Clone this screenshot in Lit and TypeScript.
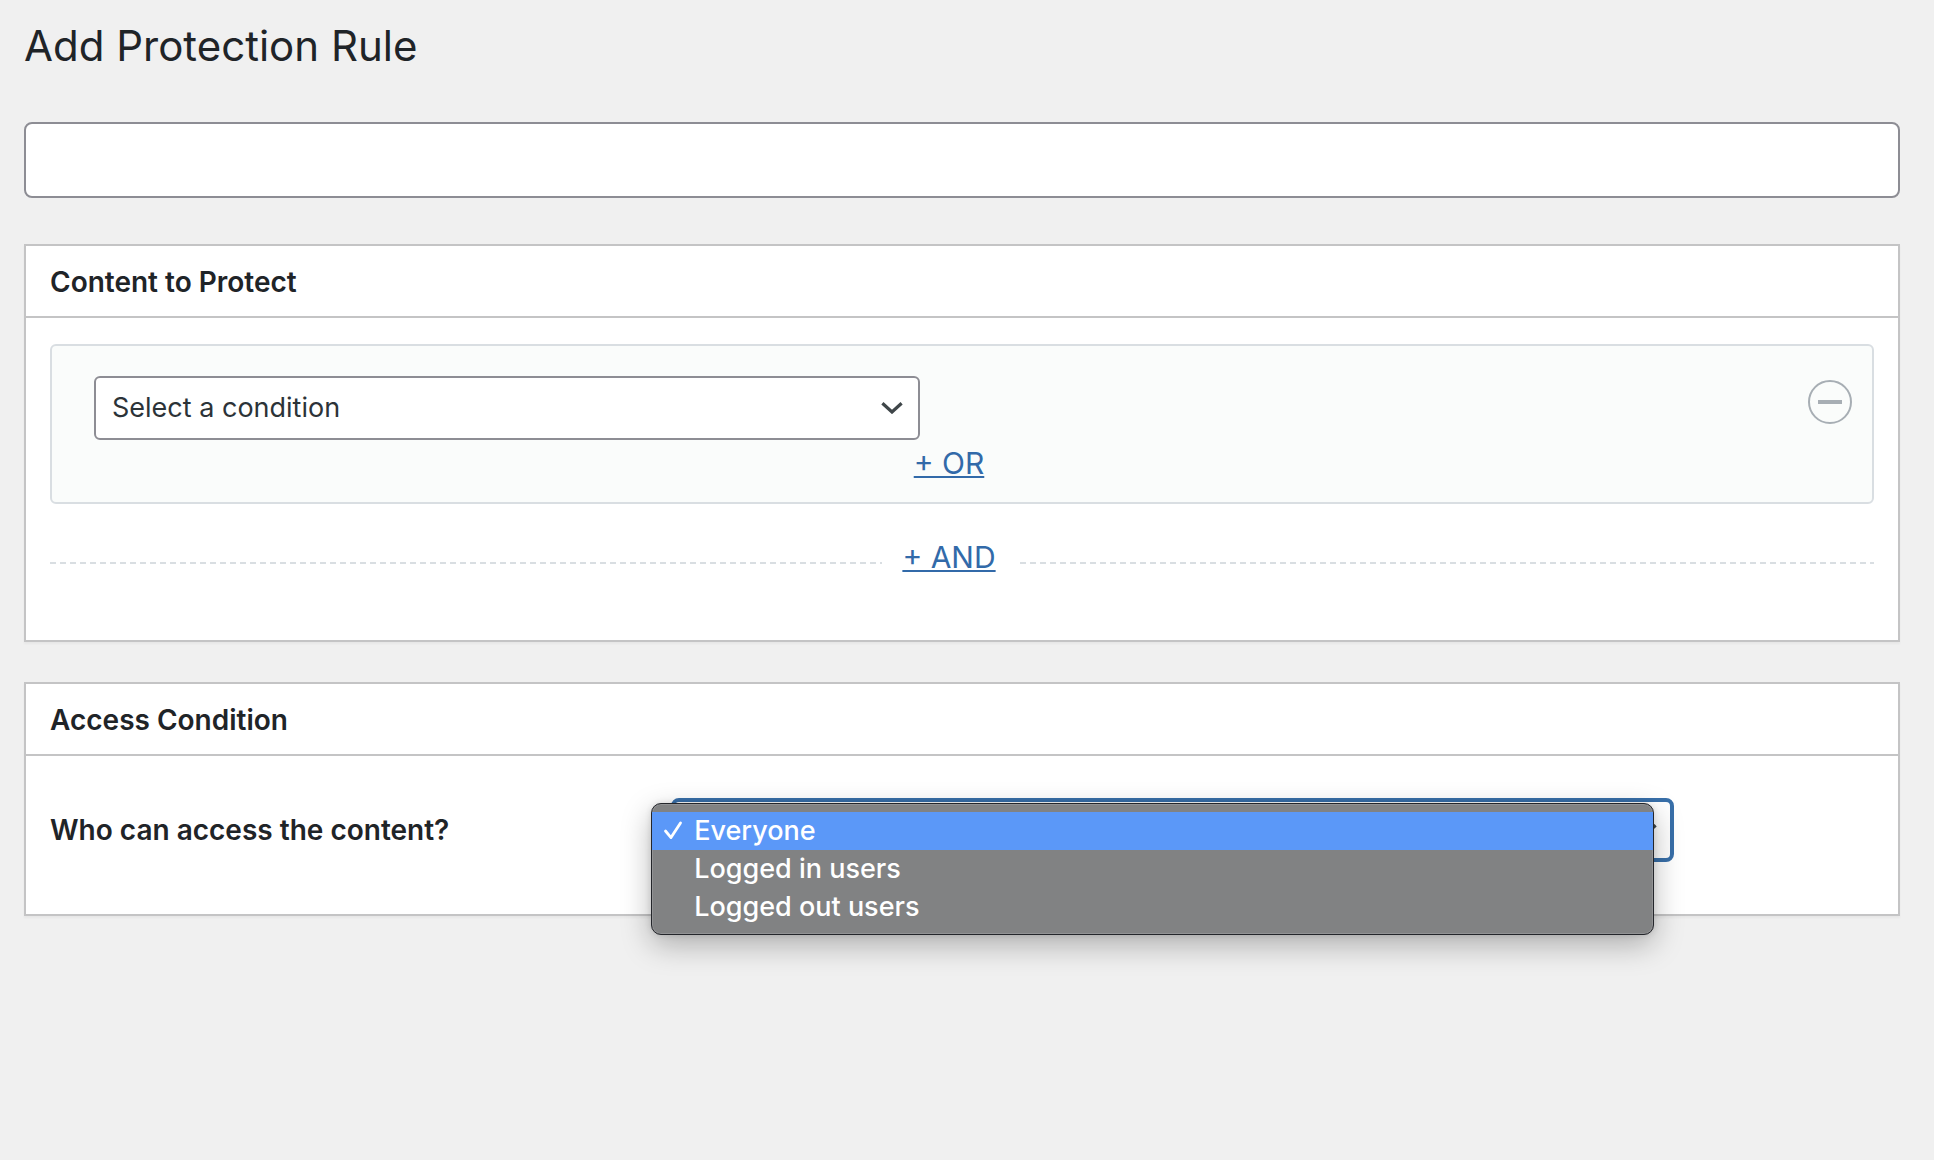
import { LitElement, html, css, svg } from "lit";
import { customElement, state } from "lit/decorators.js";

const chevron = html`<svg class="chevron" viewBox="0 0 22 12" aria-hidden="true">
  <path d="M1.4 1.2 L11 10 L20.6 1.2" fill="none" stroke="currentColor" stroke-width="3.2" />
</svg>`;

const check = svg`<path d="M2.5 10 L8 16.6 L17.5 2" fill="none" stroke="currentColor" stroke-width="2.8" stroke-linecap="round" stroke-linejoin="round" />`;

const AUDIENCES = ["Everyone", "Logged in users", "Logged out users"];

@customElement("app-root")
export class AppRoot extends LitElement {
  static styles = css`
    :host {
      display: block;
      box-sizing: border-box;
      min-height: 100vh;
      padding: 18px 34px 40px 24px;
      background: #f0f0f0;
      color: #1f2428;
      font-family: Inter, "Liberation Sans", sans-serif;
      font-size: 28px;
      line-height: 36px;
    }
    *,
    *::before,
    *::after {
      box-sizing: border-box;
    }
    .title {
      margin: 0 0 48px;
      font-size: 42px;
      line-height: 56px;
      font-weight: 400;
    }
    .name {
      display: block;
      width: 100%;
      height: 76px;
      padding: 0 16px;
      border: 2px solid #8d8d94;
      border-radius: 8px;
      background: #fff;
      color: inherit;
      font: inherit;
      outline: none;
    }
    .box {
      margin-top: 40px;
      border: 2px solid #c4c4c5;
      background: #fff;
      box-shadow: 0 2px 2px rgba(0, 0, 0, 0.04);
    }
    .name + .box {
      margin-top: 46px;
    }
    .box-title {
      margin: 0;
      padding: 18px 24px 16px;
      border-bottom: 2px solid #c4c4c5;
      font-size: 28px;
      line-height: 36px;
      font-weight: 600;
    }
    .rules {
      padding: 26px 24px 65px;
    }
    .group {
      display: grid;
      grid-template-columns: 1fr 44px;
      column-gap: 4px;
      padding: 30px 20px 21px 42px;
      border: 2px solid #d9dee2;
      border-radius: 6px;
      background: #fafcfb;
    }
    .picker {
      position: relative;
      color: #3f4649;
    }
    .group .picker {
      width: 48.3%;
    }
    .select {
      appearance: none;
      display: block;
      width: 100%;
      height: 64px;
      padding: 0 56px 0 16px;
      border: 2px solid #8d8d94;
      border-radius: 6px;
      background: #fff;
      color: #2c3338;
      font: inherit;
      font-size: 27px;
      outline: none;
    }
    .select.open {
      border: 4px solid #386fa9;
      border-radius: 8px;
      padding-left: 14px;
    }
    .chevron {
      position: absolute;
      right: 17px;
      top: 26px;
      width: 22px;
      height: 12px;
      pointer-events: none;
    }
    .or {
      display: flex;
      justify-content: center;
      margin-top: 5px;
    }
    .link {
      color: #326aa9;
      font-size: 30px;
      line-height: 36px;
      text-decoration: underline;
      text-decoration-thickness: 2px;
      text-underline-offset: 2px;
    }
    .remove {
      width: 44px;
      height: 44px;
      margin-top: 4px;
      padding: 0;
      border: 0;
      background: none;
      color: #a7aeb4;
    }
    .remove svg {
      display: block;
      width: 44px;
      height: 44px;
    }
    .and {
      display: flex;
      align-items: flex-end;
      margin-top: 35px;
    }
    .and::before,
    .and::after {
      content: "";
      flex: 1 1 0;
      height: 2px;
      margin-bottom: 11px;
      background: repeating-linear-gradient(to right, #d9dee2 0 6px, transparent 6px 10px);
    }
    .and::before {
      margin-right: 20px;
    }
    .and::after {
      flex-basis: 22px;
      margin-left: 24px;
    }
    .access {
      display: grid;
      grid-template-columns: 34% 55%;
      column-gap: 1px;
      align-items: center;
      padding: 42px 24px 52px;
    }
    .label {
      font-size: 28px;
      font-weight: 600;
    }
    .menu {
      position: absolute;
      top: 5px;
      left: -20px;
      width: 100%;
      padding: 8px 0;
      border: 1px solid #24262b;
      border-radius: 10px;
      background: #818283;
      box-shadow: inset 0 0 0 1px #929395, 0 10px 30px rgba(0, 0, 0, 0.28), 0 0 6px rgba(0, 0, 0, 0.12);
    }
    .option {
      display: flex;
      align-items: center;
      gap: 10px;
      width: 100%;
      height: 38px;
      padding: 0 11px;
      border: 0;
      background: none;
      color: #fff;
      font: inherit;
      font-size: 27px;
      font-weight: 500;
      text-align: left;
    }
    .option.current {
      background: #5b98f8;
    }
    .tick {
      flex: none;
      width: 21px;
      height: 20px;
    }
  `;

  @state() private audience = AUDIENCES[0];

  render() {
    return html`
      <main>
        <h1 class="title">Add Protection Rule</h1>
        <input class="name" type="text" aria-label="Rule name" />

        <section class="box">
          <h2 class="box-title">Content to Protect</h2>
          <div class="rules">
            <div class="group">
              <div>
                <div class="picker">
                  <select class="select" aria-label="Condition">
                    <option>Select a condition</option>
                  </select>
                  ${chevron}
                </div>
                <div class="or"><a class="link" href="#or">+ OR</a></div>
              </div>
              <button class="remove" type="button" aria-label="Remove condition">
                <svg viewBox="0 0 44 44" aria-hidden="true">
                  <circle cx="22" cy="22" r="21" fill="none" stroke="currentColor" stroke-width="2" />
                  <rect x="10" y="20" width="24" height="4" fill="currentColor" />
                </svg>
              </button>
            </div>
            <div class="and"><a class="link" href="#and">+ AND</a></div>
          </div>
        </section>

        <section class="box">
          <h2 class="box-title">Access Condition</h2>
          <div class="access">
            <label class="label" for="audience">Who can access the content?</label>
            <div class="picker">
              <select class="select open" id="audience" .value=${this.audience}>
                ${AUDIENCES.map((name) => html`<option>${name}</option>`)}
              </select>
              ${chevron}
              <div class="menu" role="listbox" aria-label="Who can access the content?">
                ${AUDIENCES.map((name) => {
                  const current = name === this.audience;
                  return html`<button
                    class="option ${current ? "current" : ""}"
                    type="button"
                    role="option"
                    aria-selected=${current}
                    @click=${() => (this.audience = name)}
                  >
                    <svg class="tick" viewBox="0 0 21 20" aria-hidden="true">${current ? check : ""}</svg>
                    ${name}
                  </button>`;
                })}
              </div>
            </div>
          </div>
        </section>
      </main>
    `;
  }
}
